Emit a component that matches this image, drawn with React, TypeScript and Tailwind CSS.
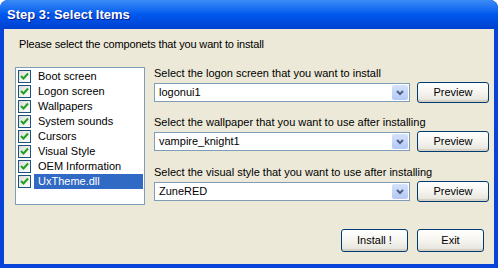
import React from "react";

const items = [
  "Boot screen",
  "Logon screen",
  "Wallpapers",
  "System sounds",
  "Cursors",
  "Visual Style",
  "OEM Information",
  "UxTheme.dll",
];

const groups = [
  { label: "Select the logon screen that you want to install", value: "logonui1", mt: "mt-0" },
  { label: "Select the wallpaper that you want to use after installing", value: "vampire_knight1", mt: "mt-[12px]" },
  { label: "Select the visual style that you want to use after installing", value: "ZuneRED", mt: "mt-[13px]" },
];

const CheckBox = () => (
  <div className="w-[13px] h-[13px] border border-[#1c5180] bg-gradient-to-br from-[#dcdcd7] to-white flex items-center justify-center shrink-0">
    <svg width="9" height="9" viewBox="0 0 9 9">
      <path d="M1 4 L3.5 6.5 L8 1.5" stroke="#21a121" strokeWidth="2" fill="none" />
    </svg>
  </div>
);

const XpButton = ({ children, w, h }: { children: React.ReactNode; w: string; h: string }) => (
  <button
    className={`${w} ${h} shrink-0 rounded-[3px] border border-[#003c74] bg-gradient-to-b from-white via-[#f5f4ef] to-[#e3e2da] text-[11px] text-black shadow-[inset_0_-2px_0_#d6d0c5]`}
  >
    {children}
  </button>
);

const Combo = ({ value }: { value: string }) => (
  <div className="w-[256px] h-[19px] border border-[#7f9db9] bg-white flex items-center">
    <span className="flex-1 pl-[4px] text-[11px] leading-none">{value}</span>
    <div className="w-[16px] h-[15px] mr-[1px] rounded-[2px] bg-gradient-to-b from-[#d6e2fb] to-[#b3c8f5] flex items-center justify-center">
      <svg width="8" height="6" viewBox="0 0 8 6">
        <path d="M1 1 L4 4 L7 1" stroke="#4d6185" strokeWidth="2" fill="none" />
      </svg>
    </div>
  </div>
);

export default function App() {
  return (
    <div
      className="w-[498px] h-[268px] flex flex-col bg-[#0842d8] rounded-t-[8px] overflow-hidden text-black"
      style={{ fontFamily: "'Liberation Sans', Arial, sans-serif" }}
    >
      <div className="h-[29px] shrink-0 bg-gradient-to-b from-[#3a8cf5] via-[#0058ee] to-[#0040d0] flex items-center pl-[7px]">
        <span className="text-white font-bold text-[13px] [text-shadow:1px_1px_0_#0a1e8c]">
          Step 3: Select Items
        </span>
      </div>
      <div className="flex-1 mx-[4px] mb-[4px] bg-[#ece9d8] flex flex-col">
        <div className="pl-[15px] pt-[8px] text-[11px] leading-[14px] tracking-[-0.15px]">
          Please select the componets that you want to install
        </div>
        <div className="flex mt-[16px] pl-[11px]">
          <div className="w-[130px] h-[138px] border border-[#7f9db9] bg-white pt-[1px] pl-[1px]">
            {items.map((it, i) => (
              <div key={it} className="h-[15px] flex items-center">
                <div className="pl-[1px] pr-[3px]">
                  <CheckBox />
                </div>
                <div
                  className={`h-[15px] flex-1 mr-[1px] pl-[4px] flex items-center text-[11px] ${
                    i === items.length - 1 ? "bg-[#316ac5] text-white" : ""
                  }`}
                >
                  {it}
                </div>
              </div>
            ))}
          </div>
          <div className="ml-[9px] -mt-[1px] flex flex-col">
            {groups.map((g) => (
              <div key={g.label} className={g.mt}>
                <div className="text-[11px] leading-[14px] mb-[2px]">{g.label}</div>
                <div className="flex items-center h-[21px] gap-[7px]">
                  <Combo value={g.value} />
                  <XpButton w="w-[72px]" h="h-[21px]">
                    Preview
                  </XpButton>
                </div>
              </div>
            ))}
          </div>
        </div>
        <div className="mt-auto flex justify-end gap-[9px] pr-[10px] pb-[12px]">
          <XpButton w="w-[67px]" h="h-[23px]">
            Install !
          </XpButton>
          <XpButton w="w-[67px]" h="h-[23px]">
            Exit
          </XpButton>
        </div>
      </div>
    </div>
  );
}
